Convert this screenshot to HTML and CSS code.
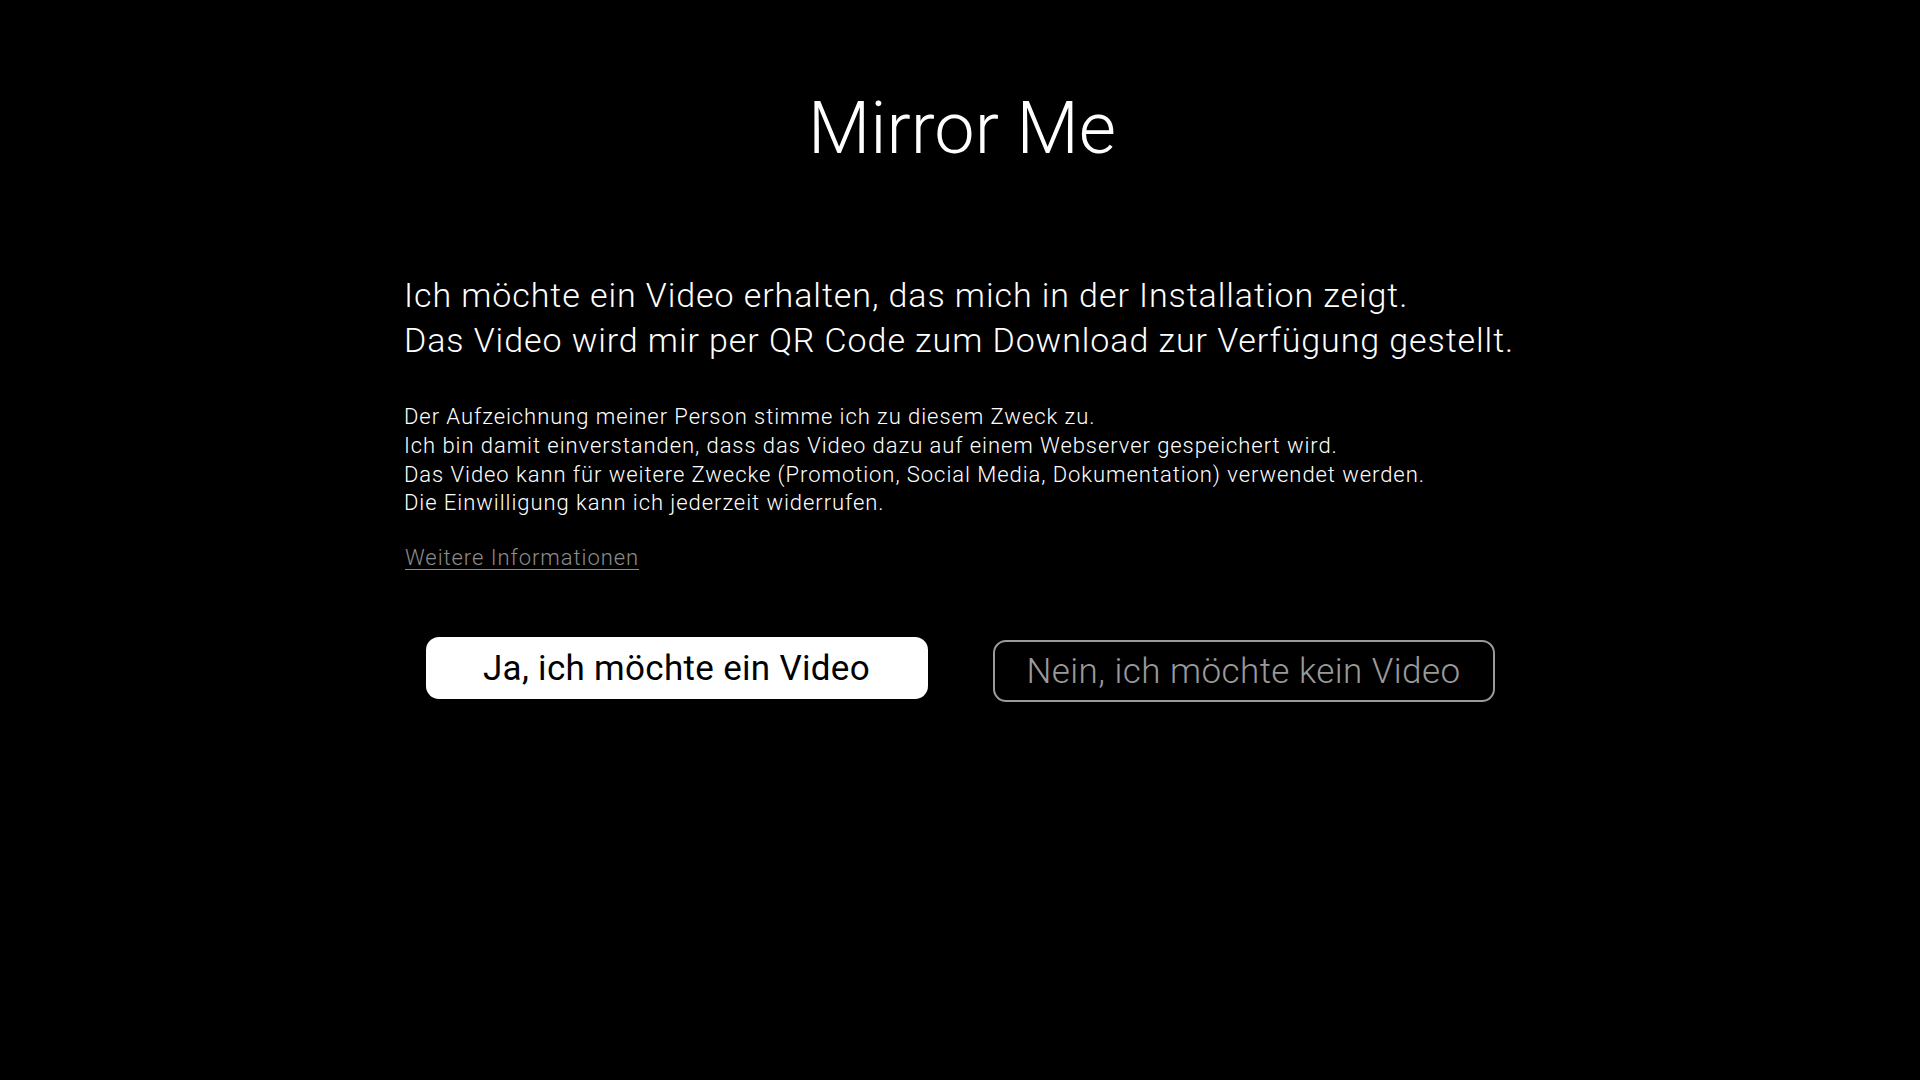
FILE: index.html
```html
<!DOCTYPE html>
<html lang="de">
<head>
<meta charset="utf-8">
<title>Mirror Me</title>
<link rel="stylesheet" href="styles.css">
</head>
<body>
<main class="page">
  <h1 class="title">Mirror Me</h1>
  <section class="content">
    <p class="lead">Ich möchte ein Video erhalten, das mich in der Installation zeigt.<br>Das Video wird mir per QR Code zum Download zur Verfügung gestellt.</p>
    <p class="consent">Der Aufzeichnung meiner Person stimme ich zu diesem Zweck zu.<br>Ich bin damit einverstanden, dass das Video dazu auf einem Webserver gespeichert wird.<br>Das Video kann für weitere Zwecke (Promotion, Social Media, Dokumentation) verwendet werden.<br>Die Einwilligung kann ich jederzeit widerrufen.</p>
    <a class="more" href="#">Weitere Informationen</a>
  </section>
  <div class="actions">
    <button class="btn btn-yes" type="button">Ja, ich möchte ein Video</button>
    <button class="btn btn-no" type="button">Nein, ich möchte kein Video</button>
  </div>
</main>
</body>
</html>
```

FILE: styles.css
```css
html, body {
  margin: 0;
  padding: 0;
  background: #000;
  height: 100%;
}

body {
  font-family: Roboto, "Liberation Sans", Arial, sans-serif;
  font-weight: 300;
  color: #fff;
}

.page {
  display: flex;
  flex-direction: column;
  align-items: center;
  padding-top: 86px;
}

.title {
  margin: 0 0 0 4px;
  font-size: 72px;
  line-height: 86px;
  font-weight: 300;
  letter-spacing: 0;
}

.content {
  width: 1112px;
  display: flex;
  flex-direction: column;
  align-items: flex-start;
  margin-top: 101px;
}

.lead {
  margin: 0;
  font-size: 34px;
  line-height: 45px;
  letter-spacing: 0.92px;
}

.consent {
  margin: 40px 0 0;
  font-size: 22px;
  line-height: 28.8px;
  letter-spacing: 0.94px;
}

.more {
  margin-top: 26px;
  margin-left: 1px;
  font-size: 22px;
  line-height: 28px;
  letter-spacing: 0.94px;
  color: #8c8c8c;
  text-decoration: underline;
  text-underline-offset: 4px;
  text-decoration-thickness: 1px;
}

.actions {
  display: flex;
  gap: 65px;
  margin-top: 65px;
  align-items: flex-start;
}

.btn {
  width: 502px;
  height: 62px;
  border-radius: 13px;
  font-family: Roboto, "Liberation Sans", Arial, sans-serif;
  font-weight: 300;
  font-size: 35px;
  padding: 0;
  display: flex;
  align-items: center;
  justify-content: center;
  cursor: pointer;
}

.btn-yes {
  background: #fff;
  color: #000;
  border: none;
  font-weight: 400;
  letter-spacing: 0.3px;
}

.btn-no {
  margin-top: 3px;
  background: #000;
  color: #9a9a9a;
  border: 2px solid #9a9a9a;
  letter-spacing: 0.45px;
}
```
